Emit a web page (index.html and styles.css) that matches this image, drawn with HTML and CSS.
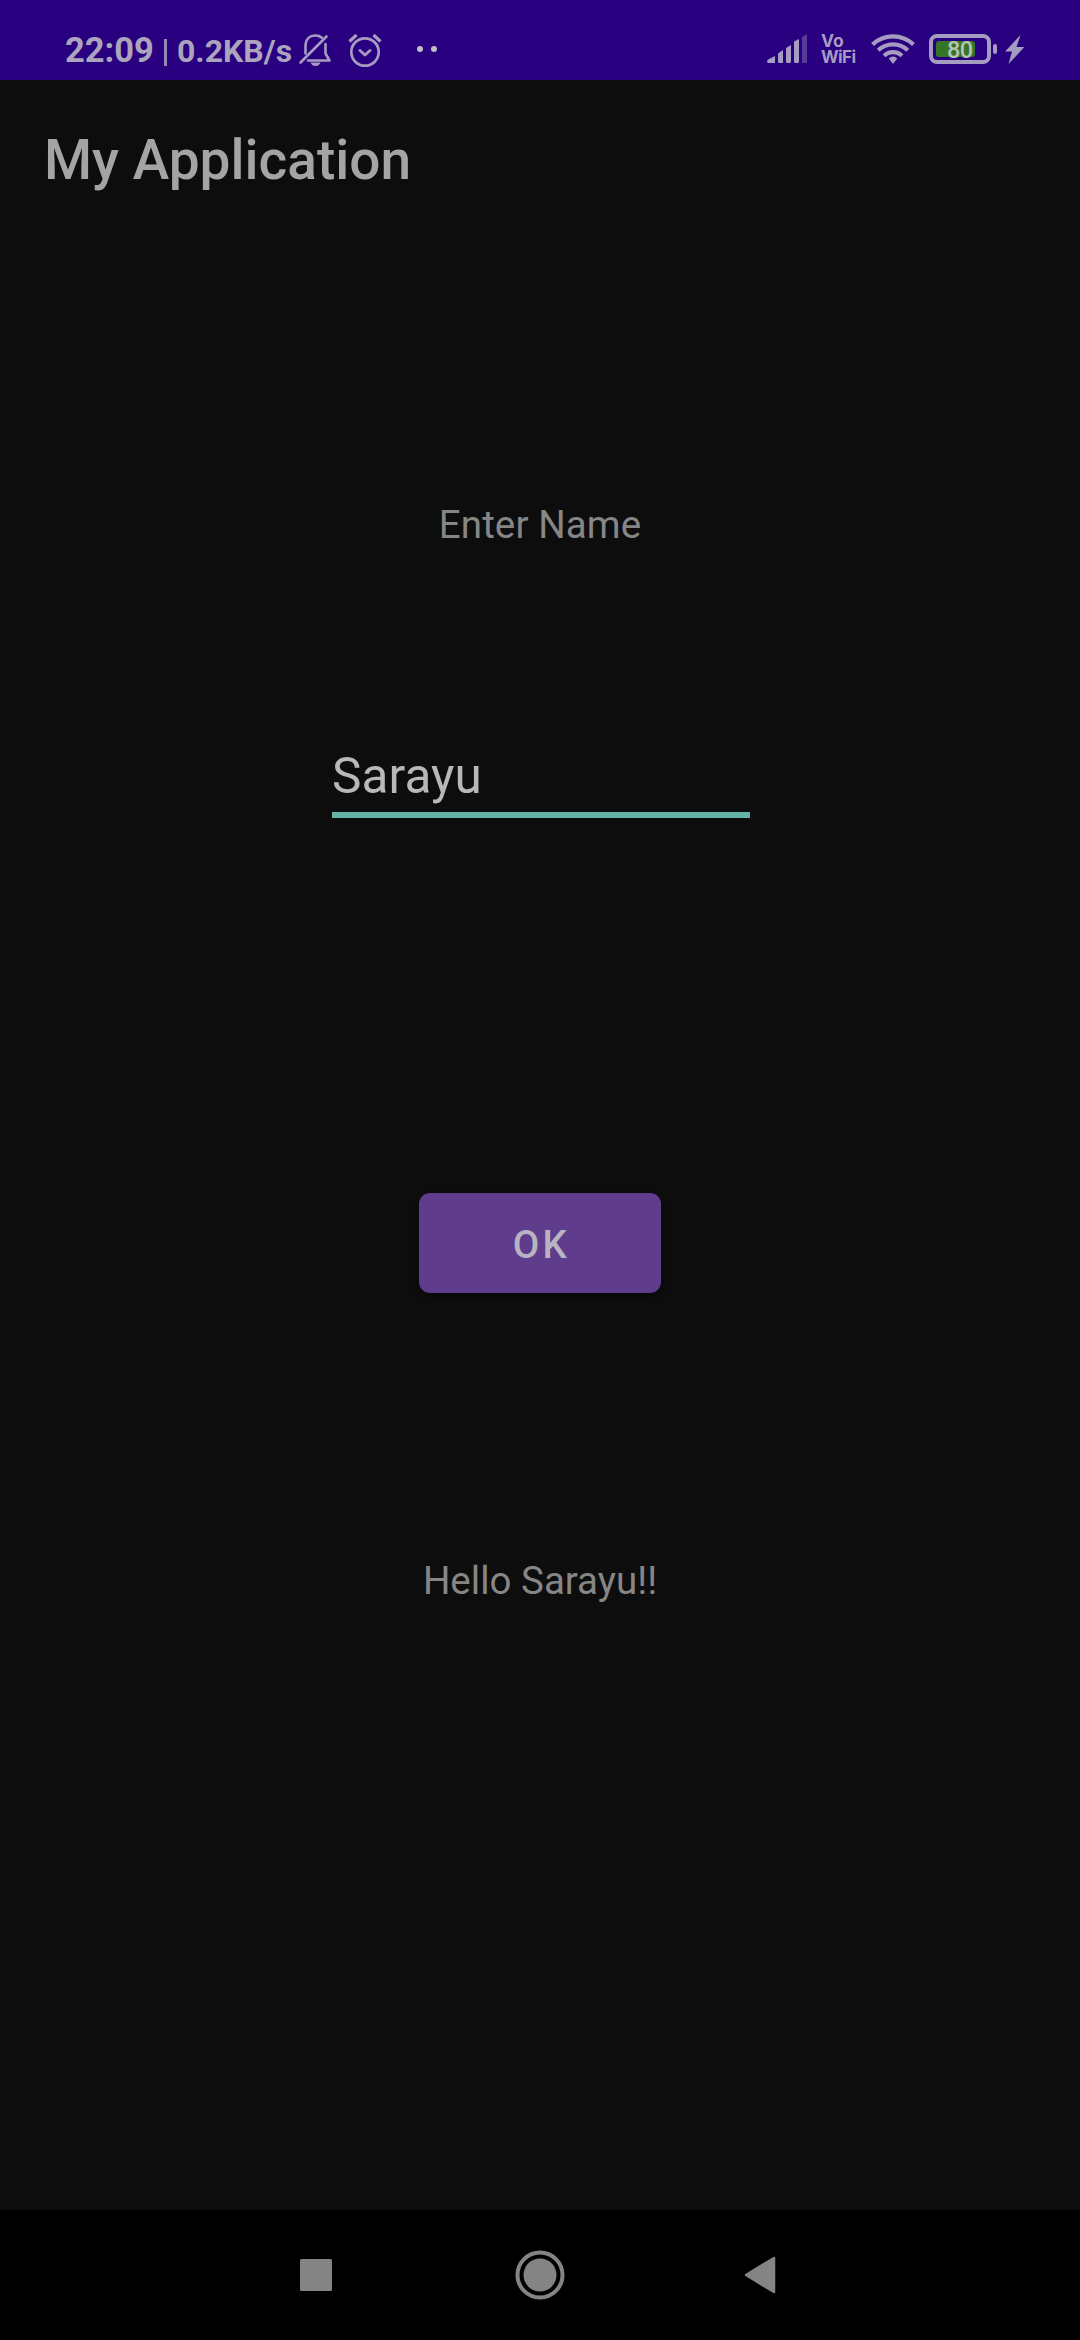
FILE: index.html
```html
<!DOCTYPE html>
<html lang="en">
<head>
<meta charset="utf-8">
<title>My Application</title>
<link rel="stylesheet" href="styles.css">
</head>
<body>
<div class="screen">
  <header class="status">
    <div class="status-left">
      <span class="clock">22:09</span>
      <span class="divider"></span>
      <span class="speed">0.2KB/s</span>
      <svg class="bell" width="34" height="34" viewBox="0 0 34 34">
        <g fill="none" stroke="currentColor" stroke-width="2.6" stroke-linecap="round" stroke-linejoin="round">
          <path d="M2.5 29.5 28.5 3.5"/>
          <path d="M7.5 20.500V13C7.500 6 12 2.500 17.500 2.500C20 2.500 22 3.200 23.800 4.600"/>
          <path d="M27.500 11V20.500L31.500 27.500H10"/>
        </g>
        <path d="M12.500 29.500H22.500Q21 33 17.500 33Q14 33 12.500 29.500Z" fill="currentColor"/>
      </svg>
      <svg class="alarm" width="36" height="36" viewBox="0 0 36 36">
        <g fill="none" stroke="currentColor" stroke-width="2.7" stroke-linecap="round">
          <circle cx="18" cy="20" r="13.700"/>
          <path d="M13 18.500 18 23 23 18.500" stroke-width="3" stroke-linejoin="round"/>
          <path d="M2.500 9.500 9.500 3M26.500 3 33.500 9.500" stroke-width="3.200" stroke-linecap="butt"/>
        </g>
      </svg>
      <span class="dots"><i></i><i></i></span>
    </div>
    <div class="status-right">
      <svg class="signal" width="40" height="30" viewBox="0 0 40 30" fill="currentColor">
        <path d="M0 27Q0 25.500 8 22V29H1.500Q0 29 0 27Z"/>
        <path d="M11 19.500 16 16V29H12.500Q11 29 11 27.500Z"/>
        <path d="M19 14 24 11V27.500Q24 29 22.500 29H20.500Q19 29 19 27.500Z"/>
        <path d="M27 7.500 32 5V27.500Q32 29 30.500 29H28.500Q27 29 27 27.500Z"/>
        <path d="M35 3 40 0V29H36.500Q35 29 35 27.500Z" opacity=".38"/>
      </svg>
      <span class="vowifi"><span class="vo">Vo</span><span class="wf">WiFi</span></span>
      <svg class="wifi" width="44" height="32" viewBox="0 0 44 32">
        <g fill="none" stroke="currentColor" stroke-width="4.200">
          <path d="M1.500 11.500C13 .7 31 .7 42.500 11.500"/>
          <path d="M7.200 17.200C15.500 9.300 28.500 9.300 36.800 17.200"/>
          <path d="M13 22.800C18 17.800 26 17.800 31 22.800"/>
        </g>
        <path d="M22 23.500Q24.500 23.500 26.200 25.500L22.800 30Q22 31 21.200 30L17.800 25.500Q19.500 23.500 22 23.500Z" fill="currentColor"/>
      </svg>
      <span class="battery"><span class="level"></span><span class="percent">80</span></span>
      <span class="nub"></span>
      <svg class="bolt" width="20" height="31" viewBox="0 0 20 31"><path d="M15.500 1 0 17.500H7L3.500 30 19.500 13H11.500Z" fill="currentColor"/></svg>
    </div>
  </header>
  <main class="app">
    <h1 class="title">My Application</h1>
    <label class="label" for="name">Enter Name</label>
    <div class="field" id="name">Sarayu</div>
    <button class="ok">OK</button>
    <p class="greeting">Hello Sarayu!!</p>
  </main>
  <nav class="nav">
    <svg class="recents" width="32" height="32" viewBox="0 0 32 32"><rect width="32" height="32" rx="1.500" fill="currentColor"/></svg>
    <svg class="home" width="50" height="50" viewBox="0 0 50 50"><circle cx="25" cy="25" r="22.500" fill="none" stroke="currentColor" stroke-width="4"/><circle cx="25" cy="25" r="16.500" fill="currentColor"/></svg>
    <svg class="back" width="32" height="38" viewBox="0 0 32 38"><path d="M2 19 30 2V36Z" fill="currentColor" stroke="currentColor" stroke-width="2.500" stroke-linejoin="round"/></svg>
  </nav>
</div>
</body>
</html>
```

FILE: styles.css
```css
* { box-sizing: border-box; }
body { margin: 0; background: #0d0d0d; font-family: Roboto, "Liberation Sans", sans-serif; }
svg { display: block; flex: none; }
.screen { width: 1080px; height: 2340px; display: flex; flex-direction: column; }
.status { height: 80px; padding: 18px 55px 0 65px; display: flex; justify-content: space-between; background: #280080; color: #a69bc0; }
.status-left, .status-right { display: flex; align-items: center; height: 62px; }
.clock { width: 99px; padding-top: 2px; font-size: 34.5px; font-weight: 700; line-height: 40px; color: #aca4bd; white-space: nowrap; }
.divider { width: 3px; height: 27px; margin-top: 7px; background: #9488b5; }
.speed { width: 119px; margin-left: 10px; padding-top: 3px; font-size: 32px; font-weight: 700; line-height: 40px; color: #aca4bd; white-space: nowrap; }
.bell { margin: 2px 0 0 2px; }
.alarm { margin: 2px 0 0 15px; }
.dots { display: flex; gap: 8px; margin-left: 34px; }
.dots i { width: 6px; height: 6px; border-radius: 50%; background: #c0bfc6; }
.vowifi { width: 38px; margin-left: 14px; display: flex; flex-direction: column; font-family: Inter, sans-serif; font-weight: 700; line-height: 17.5px; white-space: nowrap; }
.vo { font-size: 17.5px; }
.wf { font-size: 17px; letter-spacing: -0.6px; }
.wifi { margin-left: 12px; }
.battery { width: 62px; height: 30px; margin-left: 14px; border: 4px solid #a69bc0; border-radius: 8px; padding: 3px; position: relative; }
.level { display: block; width: 39px; height: 16px; border-radius: 3px; background: #367526; }
.percent { position: absolute; left: 14px; top: 1px; font-size: 23.5px; font-weight: 500; line-height: 22px; letter-spacing: -0.5px; color: #b6c3b5; }
.nub { width: 4px; height: 10px; margin-left: 2px; border-radius: 2px; background: #a69bc0; }
.bolt { margin-left: 8px; }
.app { flex: 1; display: flex; flex-direction: column; align-items: center; }
.title { align-self: flex-start; margin: 48px 0 0 44px; font-size: 55px; font-weight: 500; line-height: 64px; color: #a4a4a4; }
.label { margin-top: 307px; font-size: 38.5px; line-height: 52px; letter-spacing: 0.1px; color: #868686; }
.field { width: 418px; height: 75px; margin: 192px 0 0 2px; border-bottom: 6px solid #63b3a7; font-size: 49.5px; line-height: 66px; letter-spacing: 0.1px; color: #b8b8b8; }
.ok { width: 242px; height: 100px; margin-top: 375px; padding: 4px 0 0 3px; border: 0; border-radius: 11px; background: #5f3c8c; box-shadow: 0 3px 6px #0006; font: 500 38.5px/52px Roboto, sans-serif; letter-spacing: 3.43px; color: #b9b4c1; }
.greeting { margin: 262px 0 0; font-size: 38.5px; line-height: 52px; color: #868686; }
.nav { height: 130px; display: flex; align-items: center; padding-left: 300px; background: #000; color: #848484; }
.home { margin-left: 183px; }
.back { margin-left: 179px; }
```
